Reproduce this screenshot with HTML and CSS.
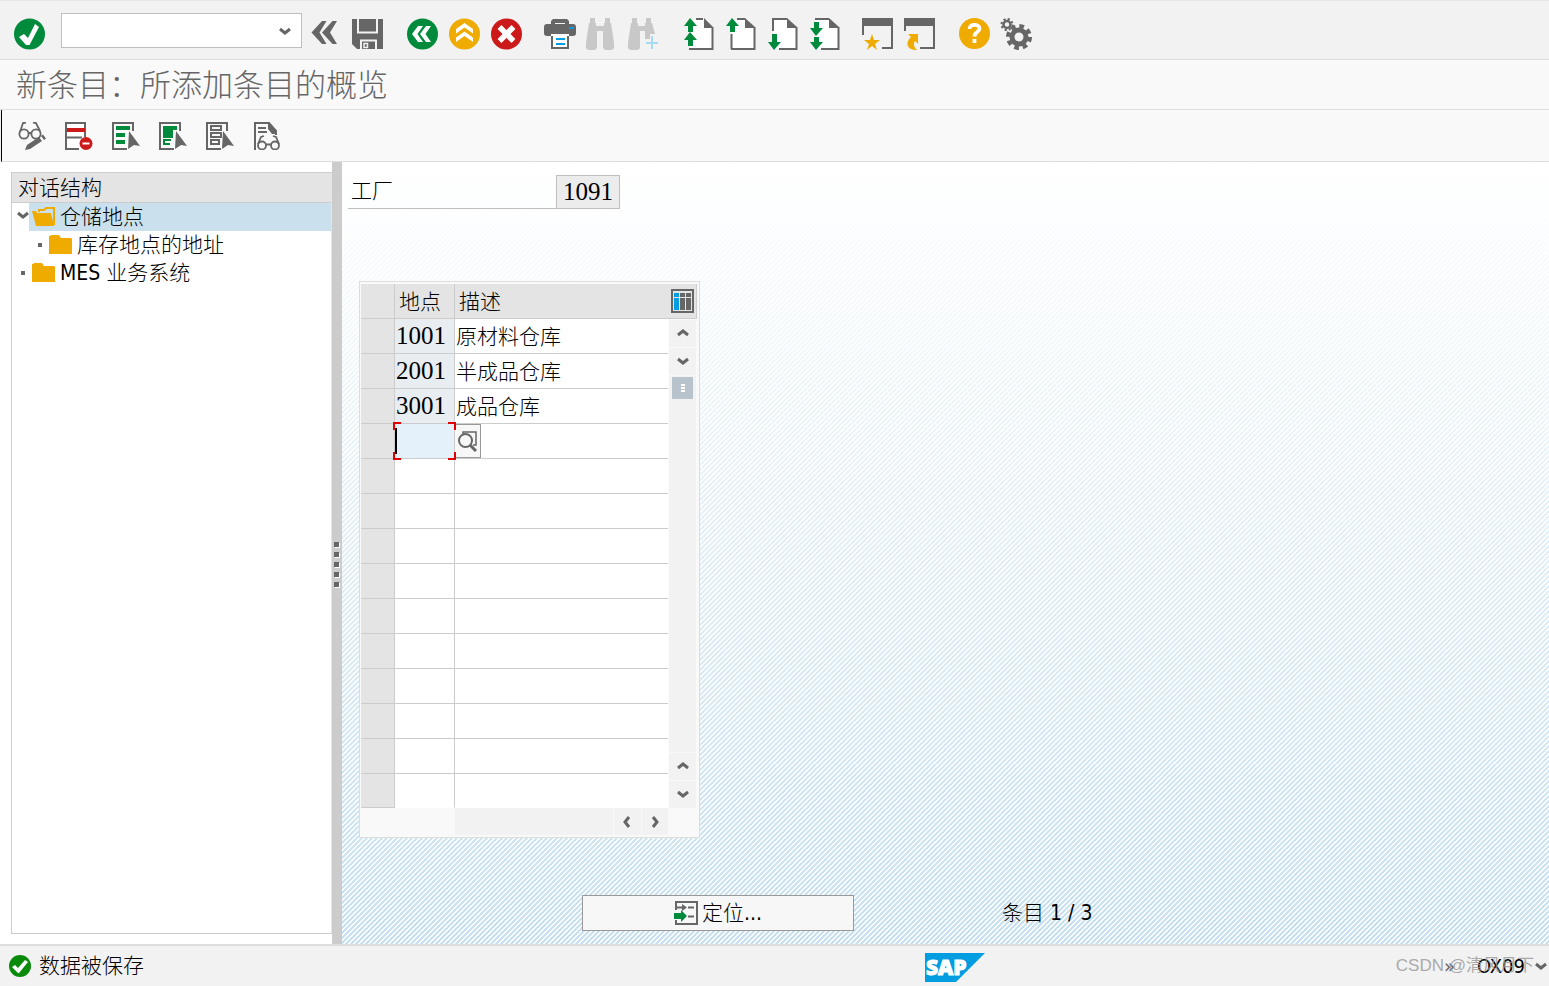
FILE: index.html
```html
<!DOCTYPE html>
<html lang="zh-CN">
<head>
  <meta charset="UTF-8" />
  <meta name="viewport" content="width=device-width, initial-scale=1.0" />
  <title>新条目：所添加条目的概览</title>
  <link rel="stylesheet" href="styles.css">
</head>
<body>
  <header class="toolbar">
    <button class="icon" aria-label="确认"><svg viewBox="0 0 32 32"><circle cx="15.500" cy="16" r="15.500" fill="#008a3b"/><path d="M5 19l5-3 4 4 7-14 4 3-9.500 18h-3.500z" fill="#fff"/></svg></button>
    <div class="command">
      <input type="text" id="command" aria-label="命令">
      <svg class="chev" viewBox="0 0 12 8"><path d="M1 2l5 4 5-4" /></svg>
    </div>
    <button class="icon back" aria-label="隐藏命令字段"><svg viewBox="0 0 32 32"><path d="M12 3h4.500l-7 11.500 7 11.500H12L1.500 14.500zM22.500 3H27l-7 11.500 7 11.500h-4.500L12 14.500z" fill="#666"/></svg></button>
    <button class="icon save" aria-label="保存"><svg viewBox="0 0 32 32"><path d="M0 1h31v30H5l-5-5z" fill="#666"/><path d="M6 1v13.500h19V1M9 31v-8.500h15V31" fill="none" stroke="#f2f2f2" stroke-width="2"/><path d="M12 25.500h3.500v4H12z" fill="#666" stroke="#f2f2f2" stroke-width="1.500"/></svg></button>
    <div class="group">
      <button class="icon" aria-label="返回"><svg viewBox="0 0 32 32"><circle cx="16.500" cy="16" r="15.500" fill="#008a3b"/><path d="M12 8h5l-5.500 8 5.500 8h-5l-6-8zM20 8h5l-5.500 8 5.500 8h-5l-6-8z" fill="#fff"/></svg></button>
      <button class="icon" aria-label="退出"><svg viewBox="0 0 32 32"><circle cx="16.500" cy="16" r="15.500" fill="#f0ab00"/><path d="M8 15.500v-4.500l8.500-6 8.500 6v4.500l-8.500-6zM8 24v-4.500l8.500-6 8.500 6V24l-8.500-6z" fill="#fff"/></svg></button>
      <button class="icon" aria-label="取消"><svg viewBox="0 0 32 32"><circle cx="16.500" cy="16" r="15.500" fill="#cc1919"/><path d="M9.500 9l14 14M23.500 9l-14 14" stroke="#fff" stroke-width="5.500"/></svg></button>
    </div>
    <div class="group">
      <button class="icon" aria-label="打印"><svg viewBox="0 0 32 32"><path d="M7 7V3l2-2h14l2 2v4h-4V5H11v2z" fill="#666"/><rect y="6" width="32" height="12" rx="3" fill="#666"/><path d="M25 9h5v2h-5z" fill="#009de0"/><path d="M7 17h18v14H7z" fill="#666"/><path d="M7 16h18v2H7zM9 16h14v13H9z" fill="#fff"/><path d="M12 21h9M12 26h9" stroke="#009de0" stroke-width="2"/></svg></button>
      <button class="icon" aria-label="查找"><svg viewBox="0 0 32 32"><path d="M4 0h5v5h1v3h8V5h1V0h5v5h1l3 20v5l-2 2h-7l-2-2V13h-6v17l-2 2H2l-2-2v-5L3 5h1z" fill="#c8c8c8"/></svg></button>
      <button class="icon" aria-label="继续查找"><svg viewBox="0 0 32 32"><path d="M4 0h5v5h1v3h7V5h1V0h5v5h1l3 11h-5v5h-5v-8h-5v17l-2 2H2l-2-2v-5L3 5h1z" fill="#c8c8c8"/><path d="M24 18v13M18 25h12" stroke="#a6dbf2" stroke-width="2"/></svg></button>
    </div>
    <div class="group">
      <button class="icon" aria-label="首页"><svg viewBox="0 0 32 32"><path d="M13 1h9l8 8v22H8V15z" fill="#fff"/><path d="M14 1h7M7 31h24M30.500 9v23" stroke="#666" stroke-width="2"/><path d="M22 0l9 9v1h-9z" fill="#666"/><path d="M8 0l7 8h-4v6H6V8H2zM8 14l7 8h-4v6H6v-6H2z" fill="#008a3b"/></svg></button>
      <button class="icon" aria-label="上一页"><svg viewBox="0 0 32 32"><path d="M13 1h9l8 8v22H8V15z" fill="#fff"/><path d="M13 1h8M7.500 16v15M7 31h24M30.500 9v23" stroke="#666" stroke-width="2"/><path d="M21 0l10 9v1H21z" fill="#666"/><path d="M8 0l7 8h-4v6H6V8H2z" fill="#008a3b"/></svg></button>
      <button class="icon" aria-label="下一页"><svg viewBox="0 0 32 32"><path d="M7 1h14l9 9v21H7z" fill="#fff"/><path d="M7 13V1h14M13 31h18M30.500 9v23" fill="none" stroke="#666" stroke-width="2"/><path d="M21 0l10 9v1H21z" fill="#666"/><path d="M8 32l7-8h-4v-8H6v8H2z" fill="#008a3b"/></svg></button>
      <button class="icon" aria-label="末页"><svg viewBox="0 0 32 32"><path d="M7 1h14l9 9v21H7z" fill="#fff"/><path d="M7 1h14M13 31h18M30.500 9v23" stroke="#666" stroke-width="2"/><path d="M21 0l10 9v1H21z" fill="#666"/><path d="M8 18l7-8h-4V4H6v6H2zM8 32l7-8h-4v-5H6v5H2z" fill="#008a3b"/></svg></button>
    </div>
    <div class="group">
      <button class="icon" aria-label="新建会话"><svg viewBox="0 0 32 32"><path d="M0 0h31v8H0z" fill="#666"/><path d="M1 8v9M30 8v22M20 30h11" stroke="#666" stroke-width="2"/><path d="M10 16l2 6h6l-5 4 2 6-5-4-5 4 2-6-5-4h6z" fill="#f0ab00"/></svg></button>
      <button class="icon" aria-label="创建快捷方式"><svg viewBox="0 0 32 32"><path d="M0 0h31v8H0z" fill="#666"/><path d="M1 8v5M30 8v22M16 30h15" stroke="#666" stroke-width="2"/><path d="M4 16h10v10l-3-3c-2 3-1 6 2 9-9 0-13-6-6-13z" fill="#f0ab00"/></svg></button>
    </div>
    <div class="group">
      <button class="icon" aria-label="帮助"><svg viewBox="0 0 32 32"><circle cx="16.500" cy="15.500" r="15.500" fill="#f0ab00"/><path d="M11.500 11c0-6 10-5 10-.5 0 4-5 3-5 8M16.500 21v4" fill="none" stroke="#fff" stroke-width="3.800"/></svg></button>
      <button class="icon" aria-label="定制本地布局"><svg viewBox="0 0 32 32"><g fill="none" stroke="#666"><circle cx="19" cy="19" r="7" stroke-width="5"/><circle cx="19" cy="19" r="11" stroke-width="4" stroke-dasharray="4.700 3.940"/><circle cx="7" cy="6.500" r="3.500" stroke-width="2.500"/><circle cx="7" cy="6.500" r="5.500" stroke-width="2" stroke-dasharray="2.200 2.120"/></g></svg></button>
    </div>
  </header>

  <h1>新条目：所添加条目的概览</h1>

  <nav class="appbar">
    <button class="icon" aria-label="显示/更改"><svg viewBox="0 0 28 28"><g fill="none" stroke="#666" stroke-width="1.800"><circle cx="6" cy="12" r="4.600"/><circle cx="18" cy="12" r="4.600"/><path d="M10.500 11h3M2 10L5 1l3-.5M22 9l-4-8-3-.5"/></g><path d="M7 28l2-5 12-8 3 4-12 8zM23 14l2-1.500 3 4-2 1.500z" fill="#666"/></svg></button>
    <button class="icon" aria-label="删除"><svg viewBox="0 0 28 28"><path d="M1 1h19v26H1z" fill="#fff"/><path d="M14 27H1V1h19v14M1 15.500h16" fill="none" stroke="#666" stroke-width="2"/><path d="M2 6h18v4H2z" fill="#cc1919"/><circle cx="21" cy="21.500" r="6.500" fill="#cc1919"/><path d="M17.500 21.500h7" stroke="#fff" stroke-width="2"/></svg></button>
    <button class="icon" aria-label="全选"><svg viewBox="0 0 28 28"><path d="M21 9V1H1v26h14" fill="none" stroke="#666" stroke-width="2"/><path d="M4 4h14v4H4zM4 11h9v4H4zM4 18h9v4H4z" fill="#008a3b"/><path d="M17 9l11 15-6-1-6 4z" fill="#666"/></svg></button>
    <button class="icon" aria-label="选择块"><svg viewBox="0 0 28 28"><path d="M21 9V1H1v26h14" fill="none" stroke="#666" stroke-width="2"/><path d="M4 4h14v4h-4v8H4z" fill="#008a3b"/><path d="M12 18H5v4h6" fill="none" stroke="#008a3b" stroke-width="2"/><path d="M17 9l11 15-6-1-6 4z" fill="#666"/></svg></button>
    <button class="icon" aria-label="取消全选"><svg viewBox="0 0 28 28"><path d="M21 9V1H1v26h14M5 4h10v4H5zM5 11h10v4H5zM5 18h8v4H5z" fill="none" stroke="#666" stroke-width="2"/><path d="M17 9l11 15-6-1-6 4z" fill="#666"/></svg></button>
    <button class="icon" aria-label="打印视图"><svg viewBox="0 0 28 28"><path d="M2 28V1h14l7 8v4" fill="none" stroke="#666" stroke-width="2"/><path d="M15 0l9 9v3h-5l-4-5z" fill="#666"/><path d="M5 6h8M5 10h9" stroke="#666" stroke-width="2"/><g fill="none" stroke="#666" stroke-width="1.800"><circle cx="9" cy="23.500" r="4"/><circle cx="22" cy="23.500" r="4"/><path d="M13 22.500h5M5 22l3-7 3-1M26 22l-3-7-3-1"/></g></svg></button>
  </nav>

  <main>
    <aside>
      <section class="tree">
        <h2>对话结构</h2>
        <ul>
          <li class="selected">
            <svg class="chev" viewBox="0 0 12 8"><path d="M1 2l5 4 5-4" /></svg>
            <a href="#storage"><svg class="folder" viewBox="0 0 24 20"><path d="M7 5V3h5l2-2h8v17" fill="none" stroke="#f0ab00" stroke-width="2"/><path d="M0 4h4l1 2h14l3 13H4z" fill="#f0ab00"/></svg>仓储地点</a>
          </li>
          <li class="child">
            <i class="dot"></i>
            <a href="#address"><svg class="folder" viewBox="0 0 24 20"><path d="M1 1l1-1h8l2 3h10l1 1v15H0V1z" fill="#f0ab00"/></svg>库存地点的地址</a>
          </li>
          <li>
            <i class="dot"></i>
            <a href="#mes"><svg class="folder" viewBox="0 0 24 20"><path d="M1 1l1-1h8l2 3h10l1 1v15H0V1z" fill="#f0ab00"/></svg>MES 业务系统</a>
          </li>
        </ul>
      </section>
    </aside>
    <div class="splitter"><i></i><i></i><i></i><i></i><i></i></div>

    <section class="work">
      <div class="field">
        <label for="plant">工厂</label>
        <input type="text" id="plant" value="1091" readonly>
      </div>

      <div class="control">
        <table>
          <colgroup><col class="c-sel"><col class="c-loc"><col class="c-desc"><col class="c-scroll"></colgroup>
          <thead>
            <tr>
              <th></th>
              <th>地点</th>
              <th>描述</th>
              <th class="config"><button aria-label="表格设置"><svg viewBox="0 0 24 24"><path d="M2 1h21v22H2z" fill="#e4e4e4" stroke="#666" stroke-width="2"/><path d="M4 4h5v17H4z" fill="#009de0"/><path d="M10 4h5v17h-5zM16 4h5v17h-5z" fill="#666"/><path d="M3 8.500h18" stroke="#e4e4e4"/></svg></button></th>
            </tr>
          </thead>
          <tbody id="rows"></tbody>
        </table>
        <div class="hscroll">
          <button aria-label="向左"><svg class="chev" viewBox="0 0 8 12"><path d="M6 1L2 6l4 5" /></svg></button>
          <button aria-label="向右"><svg class="chev" viewBox="0 0 8 12"><path d="M2 1l4 5-4 5" /></svg></button>
        </div>
      </div>

      <div class="actions">
        <button class="position"><svg viewBox="0 0 24 24"><path d="M2 9V1h21v22H2v-4" fill="none" stroke="#666" stroke-width="2"/><path d="M3 6.500h6M14 6.500h6M14 15.500h6" stroke="#666" stroke-width="2"/><path d="M8 3l5 3.500L8 10z" fill="#666"/><path d="M0 12h7v-3l6 6-6 6v-3H0z" fill="#008a3b"/></svg>定位...</button>
        <span class="count">条目 1 / 3</span>
      </div>
    </section>
  </main>

  <footer>
    <p class="message"><svg viewBox="0 0 22 22"><circle cx="11" cy="11" r="11" fill="#0a8a0a"/><path d="M3 12l3-2 3 3 7-8 3 2-9 11H9z" fill="#fff"/></svg>数据被保存</p>
    <svg class="logo" viewBox="0 0 60 29"><path d="M0 0h60L31 29H0z" fill="#009de0"/><text x="1" y="22">SAP</text></svg>
    <div class="system">
      <span class="more">»</span>
      <span class="tcode">OX09</span>
      <svg class="chev" viewBox="0 0 12 8"><path d="M1 2l5 4 5-4" /></svg>
      <span class="watermark">CSDN @清风月下</span>
    </div>
  </footer>

  <script>
    const data = [
      ['1001', '原材料仓库'],
      ['2001', '半成品仓库'],
      ['3001', '成品仓库']
    ];
    const total = 14;
    const up = '<svg class="chev" viewBox="0 0 12 8"><path d="M1 6l5-4 5 4" /></svg>';
    const down = '<svg class="chev" viewBox="0 0 12 8"><path d="M1 2l5 4 5-4" /></svg>';
    const scroll = `
      <td class="scroll" rowspan="${total}">
        <div class="vscroll">
          <button aria-label="上一行">${up}</button>
          <button aria-label="下一行">${down}</button>
          <div class="thumb"><i></i><i></i><i></i></div>
          <div class="track"></div>
          <button aria-label="上一页">${up}</button>
          <button aria-label="下一页">${down}</button>
        </div>
      </td>`;
    const help = `<button class="help" aria-label="搜索帮助"><svg viewBox="0 0 22 22"><path d="M6 5V2h13v13h-3" fill="none" stroke="#666" stroke-width="1.500"/><circle cx="8.500" cy="10.500" r="6.500" fill="#f7f7f7" stroke="#666" stroke-width="2"/><path d="M13 15l6 6" stroke="#666" stroke-width="3"/></svg></button>`;
    let html = '';
    for (let i = 0; i < total; i++) {
      const row = data[i];
      const active = i === data.length;
      html += `<tr class="${active ? 'active' : ''}">
        <td class="sel"></td>
        <td class="loc ${row ? 'filled' : ''}"><input type="text" aria-label="地点 ${i + 1}" value="${row ? row[0] : ''}" ${row ? 'readonly' : ''}>${active ? '<span class="frame"></span>' : ''}</td>
        <td class="desc"><input type="text" aria-label="描述 ${i + 1}" value="${row ? row[1] : ''}">${active ? help : ''}</td>
        ${i === 0 ? scroll : ''}
      </tr>`;
    }
    document.getElementById('rows').innerHTML = html;
  </script>
</body>
</html>
```
FILE: styles.css
```css
* {
  box-sizing: border-box;
}
body {
  margin: 0;
  min-height: 100vh;
  display: flex;
  flex-direction: column;
  font: 21px/28px "DejaVu Sans Condensed", "Noto Sans CJK SC", sans-serif;
  font-weight: 300;
  color: #000;
  background: #f2f2f2;
}
button {
  padding: 0;
  border: none;
  background: none;
  font: inherit;
  cursor: pointer;
}
input {
  font: inherit;
  color: inherit;
  border-radius: 0;
  outline: none;
}
svg {
  display: block;
}
.chev {
  width: 12px;
  height: 8px;
  fill: none;
  stroke: #666;
  stroke-width: 3;
}
.toolbar {
  height: 60px;
  padding: 8px 14px 0;
  display: flex;
  align-items: center;
  border-top: 1px solid #e6e6e6;
  border-bottom: 1px solid #ddd;
}
.toolbar .icon {
  width: 32px;
  height: 32px;
}
.command {
  position: relative;
  width: 241px;
  margin: 0 8px 8px 15px;
}
.command input {
  display: block;
  width: 100%;
  height: 35px;
  padding: 0 32px 0 6px;
  border: 1px solid #bfbfbf;
  background: #fff;
}
.command .chev {
  position: absolute;
  right: 11px;
  top: 14px;
}
.save {
  margin-left: 10px;
}
.group {
  display: flex;
  gap: 10px;
  margin-left: 22px;
}
h1 {
  margin: 0;
  height: 50px;
  padding-left: 16px;
  font-size: 31px;
  line-height: 50px;
  font-weight: 300;
  color: #666;
  background: #f9f9f9;
  border-bottom: 1px solid #ddd;
}
.appbar {
  display: flex;
  align-items: center;
  gap: 19px;
  height: 52px;
  margin-left: 1px;
  padding-left: 16px;
  border-left: 1px solid #000;
  border-bottom: 1px solid #ddd;
  background: #f9f9f9;
}
.appbar .icon,
.appbar svg {
  width: 28px;
  height: 28px;
}
main {
  flex: 1;
  display: flex;
}
aside {
  flex: 0 0 332px;
  display: flex;
  padding: 10px 0 10px 11px;
  background: #fff;
}
.tree {
  flex: 1;
  border: 1px solid #ccc;
  border-right-color: #e4e4e4;
}
h2 {
  margin: 0;
  padding-left: 6px;
  height: 30px;
  font-size: 21px;
  line-height: 31px;
  font-weight: 300;
  background: #e4e4e4;
  border-bottom: 1px solid #ccc;
}
ul {
  margin: 0;
  padding: 0;
  list-style: none;
}
li {
  display: flex;
  align-items: center;
  height: 28px;
  padding-left: 5px;
}
li .chev {
  margin-bottom: 4px;
}
li a {
  flex: 1;
  display: flex;
  align-items: center;
  gap: 4px;
  padding-left: 3px;
  line-height: 28px;
  color: #000;
  text-decoration: none;
}
.selected a {
  background: #cae1ed;
}
.child {
  padding-left: 22px;
}
.folder {
  width: 24px;
  height: 20px;
}
.dot {
  width: 4px;
  height: 4px;
  margin: 0 4px;
  background: #666;
}
.splitter {
  width: 10px;
  display: flex;
  flex-direction: column;
  justify-content: center;
  align-items: center;
  gap: 5px;
  background: #ccc;
  padding: 22px 2px 0 0;
}
.splitter i {
  width: 5px;
  height: 5px;
  background: #666;
  box-shadow: 1px 1px #fff;
}
.work {
  flex: 1;
  padding: 13px 6px;
  background:
    linear-gradient(#fff, rgba(255, 255, 255, 0)),
    linear-gradient(135deg, #c8e1f0 25%, #fff 25%, #fff 50%, #c8e1f0 50%, #c8e1f0 75%, #fff 75%) 0 0 / 5px 5px;
}
.field {
  display: flex;
}
.field label {
  width: 208px;
  padding-left: 3px;
  line-height: 33px;
  border-bottom: 1px solid #bfbfbf;
}
.field input {
  width: 64px;
  height: 34px;
  padding: 0 6px;
  border: 1px solid #bfbfbf;
  background: #ececec;
}
.field input,
.loc input {
  font-family: "Liberation Serif", serif;
  font-size: 25px;
}
.control {
  width: 341px;
  margin: 72px 0 57px 11px;
  padding: 2px 1px 1px;
  border: 1px solid #ddd;
  background: #f9f9f9;
}
table {
  width: 336px;
  table-layout: fixed;
  border-collapse: separate;
  border-spacing: 0;
}
.c-sel {
  width: 34px;
}
.c-loc {
  width: 60px;
}
.c-desc {
  width: 213px;
}
th {
  height: 35px;
  padding: 2px 4px 0;
  text-align: left;
  font-weight: 300;
  background: #e4e4e4;
  border-right: 1px solid #ccc;
  border-bottom: 1px solid #ccc;
}
th:nth-child(3) {
  border-right: none;
}
.config {
  padding: 0 2px;
}
.config svg {
  width: 24px;
  height: 24px;
}
.config button {
  display: block;
}
td {
  position: relative;
  height: 35px;
  padding: 0;
  background: #fff;
  border-bottom: 1px solid #ccc;
}
td input {
  display: block;
  width: 100%;
  height: 34px;
  padding: 0 1px;
  border: none;
  background: none;
}
.desc input {
  height: 33px;
  padding-bottom: 2px;
}
.sel {
  background: #e4e4e4;
  border-right: 1px solid #ccc;
}
.loc {
  border-right: 1px solid #ccc;
}
.filled {
  background: #e8edf1;
}
tr:last-child td {
  height: 34px;
}
tr:last-child td input {
  height: 32px;
}
tr:last-child .loc,
tr:last-child .desc {
  border-bottom-color: #fff;
}
.active .loc {
  background: #e4f1fa;
}
.active .loc input {
  height: 26px;
  border-left: 2px solid #000;
}
/* red corner marks round the active cell */
.frame {
  position: absolute;
  inset: -2px -2px;
  pointer-events: none;
  background:
    linear-gradient(#e30000, #e30000) 0 0 / 8px 2px,
    linear-gradient(#e30000, #e30000) 0 0 / 2px 8px,
    linear-gradient(#e30000, #e30000) 100% 0 / 8px 2px,
    linear-gradient(#e30000, #e30000) 100% 0 / 2px 8px,
    linear-gradient(#e30000, #e30000) 0 100% / 8px 2px,
    linear-gradient(#e30000, #e30000) 0 100% / 2px 8px,
    linear-gradient(#e30000, #e30000) 100% 100% / 8px 2px,
    linear-gradient(#e30000, #e30000) 100% 100% / 2px 8px;
  background-repeat: no-repeat;
  z-index: 1;
}
.help {
  position: absolute;
  left: 0;
  top: 0;
  width: 26px;
  height: 34px;
  padding-left: 2px;
  background: #f7f7f7;
  border: 1px solid #999;
  border-left: none;
}
.help svg {
  width: 22px;
  height: 22px;
}
.scroll {
  border: none;
  background: #f9f9f9;
}
.vscroll {
  display: flex;
  flex-direction: column;
  gap: 1px;
  height: 488px;
  margin-left: 1px;
  width: 27px;
}
.vscroll button,
.hscroll button {
  display: flex;
  justify-content: center;
  align-items: center;
  width: 27px;
  height: 27px;
  background: #f2f2f2;
}
.thumb {
  height: 24px;
  border: 1px solid #f2f2f2;
  border-width: 1px 3px;
  background: #b8c3ce;
  display: flex;
  flex-direction: column;
  align-items: center;
  justify-content: center;
  gap: 1px;
}
.thumb i {
  width: 4px;
  height: 2px;
  background: #fff;
}
.track {
  flex: 1;
  margin-top: -1px;
  background: #f2f2f2;
}
.hscroll {
  display: flex;
  justify-content: flex-end;
  gap: 1px;
  width: 213px;
  margin: 0 0 1px 94px;
  background: #f2f2f2;
}
.hscroll button {
  border-left: 1px solid #f9f9f9;
}
.hscroll .chev {
  width: 8px;
  height: 12px;
}
.actions {
  display: flex;
  align-items: center;
  gap: 148px;
  margin-left: 234px;
}
.position {
  display: flex;
  justify-content: center;
  align-items: center;
  gap: 4px;
  width: 272px;
  height: 36px;
  background: #f7f7f7;
  border: 1px solid #999;
}
.position svg {
  width: 24px;
  height: 24px;
}
footer {
  display: flex;
  align-items: center;
  height: 42px;
  border-top: 2px solid #ddd;
}
.message {
  flex: 0 0 calc(60% - 4px);
  display: flex;
  align-items: center;
  gap: 8px;
  margin: 0;
  padding-left: 9px;
}
.message svg {
  width: 22px;
  height: 22px;
}
.logo {
  width: 60px;
  height: 29px;
  margin-top: 2px;
  overflow: visible;
}
.logo text {
  font: 800 21px "Open Sans", sans-serif;
  fill: #fff;
  stroke: #fff;
}
.system {
  position: relative;
  flex: 1;
  display: flex;
  align-items: center;
  justify-content: flex-end;
  gap: 10px;
  padding-right: 2px;
  font-size: 20px;
}
.more {
  margin-right: 12px;
  color: #666;
}
.watermark {
  position: absolute;
  right: 15px;
  top: 0;
  font: 17px/28px "Liberation Sans", "Noto Sans CJK SC", sans-serif;
  color: #999;
  opacity: 0.8;
  white-space: nowrap;
}
```
